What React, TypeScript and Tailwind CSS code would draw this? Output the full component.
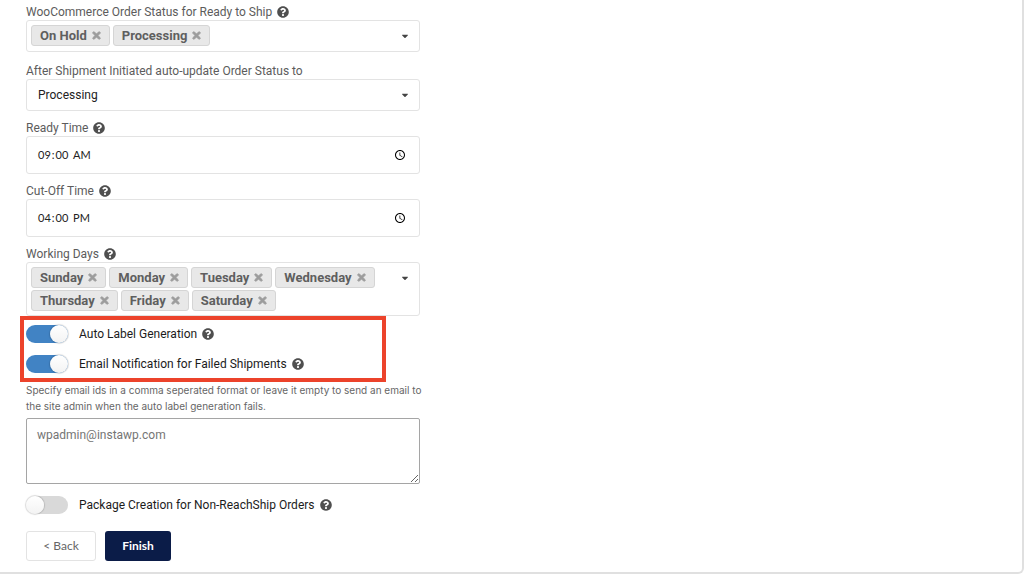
import { useId, useState } from "react";
import type { ReactNode } from "react";
import { FaCaretDown, FaQuestionCircle, FaTimes } from "react-icons/fa";

function Help({ topic }: { topic: string }) {
  return (
    <button type="button" aria-label={`Help: ${topic}`} className="shrink-0 text-[#4f4f4f]">
      <FaQuestionCircle className="size-[12px]" />
    </button>
  );
}

function FieldLabel({ text, htmlFor, id, help }: { text: string; htmlFor?: string; id?: string; help?: boolean }) {
  return (
    <div className="flex h-4 items-center gap-[5px] text-xs leading-4 text-[#5c5c5c]">
      <label id={id} htmlFor={htmlFor}>
        {text}
      </label>
      {help && <Help topic={text} />}
    </div>
  );
}

function TagField({ label, initial }: { label: string; initial: string[] }) {
  const id = useId();
  const [tags, setTags] = useState(initial);
  return (
    <div>
      <FieldLabel text={label} id={id} help />
      <div
        role="group"
        aria-labelledby={id}
        className="flex min-h-8 items-start justify-between rounded-[3px] border border-[#e3e3e3] bg-white py-1 pr-[9px] pl-1"
      >
        <ul className="flex flex-wrap gap-x-[3px] gap-y-[2px]">
          {tags.map((tag) => (
            <li
              key={tag}
              className="flex h-[21px] items-center gap-1 rounded-[3px] border border-[#d5d5d5] bg-[#e8e8e8] pr-[7px] pl-2 text-[13px] leading-4 font-bold text-[#5f5f5f]"
            >
              {tag}
              <button
                type="button"
                aria-label={`Remove ${tag}`}
                onClick={() => setTags(tags.filter((t) => t !== tag))}
                className="text-[#9c9c9c]"
              >
                <FaTimes className="size-[11px]" stroke="currentColor" strokeWidth={44} />
              </button>
            </li>
          ))}
        </ul>
        <button type="button" aria-label={`Open ${label}`} className="flex h-[22px] shrink-0 items-center text-[#444]">
          <FaCaretDown className="size-[10px]" />
        </button>
      </div>
    </div>
  );
}

function TimeField({ label, value }: { label: string; value: string }) {
  const id = useId();
  return (
    <div>
      <FieldLabel text={label} htmlFor={id} help />
      <input
        id={id}
        type="time"
        defaultValue={value}
        className="block h-[38px] w-full rounded-[3px] border border-[#e3e3e3] bg-white px-[10px] font-[Lato,sans-serif] text-[11px] text-[#222]"
      />
    </div>
  );
}

function Toggle({ label, on }: { label: string; on?: boolean }) {
  const id = useId();
  return (
    <div className="flex h-5 items-center gap-[5px] text-xs text-[#1c1c1c]">
      <input
        id={id}
        type="checkbox"
        role="switch"
        defaultChecked={on}
        className="relative mr-[6px] h-[18px] w-[42px] shrink-0 appearance-none rounded-full bg-[#d9d9d9] before:absolute before:top-0 before:left-0 before:size-[18px] before:rounded-full before:bg-linear-to-b before:from-white before:to-[#f3f3f3] before:shadow-[0_0_1px_1px_rgba(0,0,0,0.14)] checked:bg-[#4183c4] checked:before:left-6"
      />
      <label htmlFor={id}>{label}</label>
      <Help topic={label} />
    </div>
  );
}

function Card({ children }: { children: ReactNode }) {
  return (
    <main className="rounded-br-md border-r-2 border-b-2 border-[#e0e0e0] bg-white px-[26px] pt-1 pb-[11px] font-[Roboto,sans-serif]">
      {children}
    </main>
  );
}

export default function App() {
  return (
    <Card>
      <form className="w-full max-w-[394px]" onSubmit={(e) => e.preventDefault()}>
        <div className="flex flex-col gap-[11px]">
          <TagField label="WooCommerce Order Status for Ready to Ship" initial={["On Hold", "Processing"]} />
          <div>
            <FieldLabel text="After Shipment Initiated auto-update Order Status to" htmlFor="after-status" />
            <div className="relative">
              <select
                id="after-status"
                className="block h-8 w-full appearance-none rounded-[3px] border border-[#e3e3e3] bg-white px-[11px] text-xs text-[#222]"
              >
                <option>Processing</option>
                <option>On Hold</option>
                <option>Completed</option>
              </select>
              <FaCaretDown className="pointer-events-none absolute top-[11px] right-[10px] size-[10px] text-[#444]" />
            </div>
          </div>
        </div>
        <div className="mt-[9px] flex flex-col gap-[9px]">
          <TimeField label="Ready Time" value="09:00" />
          <TimeField label="Cut-Off Time" value="16:00" />
          <TagField
            label="Working Days"
            initial={["Sunday", "Monday", "Tuesday", "Wednesday", "Thursday", "Friday", "Saturday"]}
          />
        </div>
        <div className="relative flex flex-col gap-[10px] py-2">
          <Toggle label="Auto Label Generation" on />
          <Toggle label="Email Notification for Failed Shipments" on />
          <div className="pointer-events-none absolute top-0 right-[34px] bottom-0 -left-[6px] border-4 border-[#ec432b]" />
        </div>
        <label htmlFor="emails" className="-mr-1 block font-[Inter,sans-serif] text-[10px] leading-4 text-[#666]">
          Specify email ids in a comma seperated format or leave it empty to send an email to the site admin when the
          auto label generation fails.
        </label>
        <textarea
          id="emails"
          placeholder="wpadmin@instawp.com"
          className="mt-1 block h-[66px] w-full rounded-[2px] border border-[#a5a5a5] px-[10px] py-2 text-xs leading-4 text-[#222] placeholder:text-[#757575]"
        />
        <div className="mt-[11px]">
          <Toggle label="Package Creation for Non-ReachShip Orders" />
        </div>
        <div className="mt-4 flex gap-[9px] font-[Lato,sans-serif] text-xs">
          <button
            type="button"
            className="h-[30px] w-[70px] rounded-[3px] border border-[#e3e3e3] bg-white text-[#666]"
          >
            &lt; Back
          </button>
          <button type="submit" className="h-[30px] w-[66px] rounded-[3px] bg-[#0b1c48] font-bold text-white">
            Finish
          </button>
        </div>
      </form>
    </Card>
  );
}
